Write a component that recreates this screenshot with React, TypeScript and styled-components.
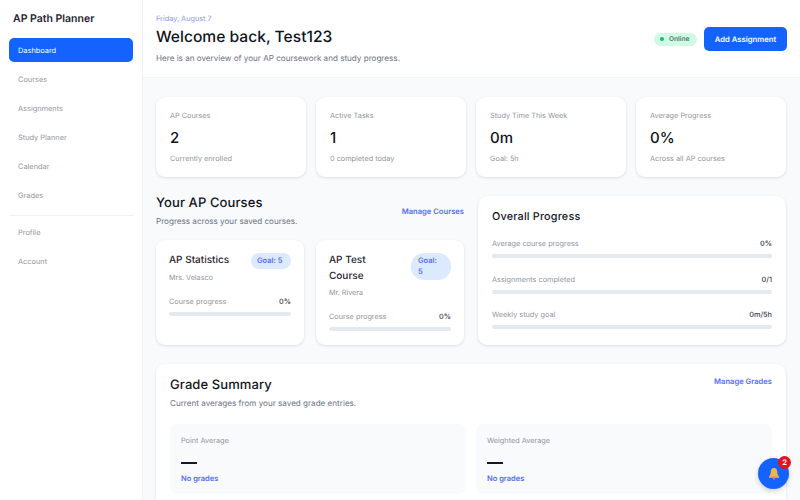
import * as React from 'react';
import styled, { createGlobalStyle } from 'styled-components';

const GlobalStyle = createGlobalStyle`
  html, body {
    margin: 0;
    height: 100%;
    overflow: hidden;
    background: #f8fafc;
    font-family: Inter, "Liberation Sans", sans-serif;
    color: #111827;
    text-rendering: geometricPrecision;
  }
  * { box-sizing: border-box; }
`;

const Shell = styled.div`
  display: flex;
  width: 800px;
  height: 500px;
  overflow: hidden;
`;

const Sidebar = styled.aside`
  flex: 0 0 143px;
  background: #fff;
  border-right: 1px solid #eef0f3;
  padding: 13px 9px;
`;

const Brand = styled.div`
  font-size: 10.5px;
  font-weight: 600;
  line-height: 12px;
  padding: 0 4px;
  margin-bottom: 13px;
  color: #1f2430;
`;

const NavItem = styled.div<{ $active?: boolean }>`
  height: 24px;
  display: flex;
  align-items: center;
  padding: 0 9px;
  margin-bottom: 5px;
  border-radius: 5px;
  font-size: 7.4px;
  background: ${p => (p.$active ? '#1463ff' : 'transparent')};
  color: ${p => (p.$active ? '#fff' : '#92969e')};
`;

const NavDivider = styled.div`
  height: 1px;
  background: #eef0f3;
  margin: 8px 0 4px;
`;

const Main = styled.main`
  flex: 1;
  min-width: 0;
`;

const Header = styled.header`
  height: 78px;
  background: #fff;
  border-bottom: 1px solid #f0f2f5;
  padding: 14px 13px 0 13px;
  display: flex;
  justify-content: space-between;
`;

const DateLine = styled.div`
  font-size: 7.3px;
  line-height: 9px;
  color: #8f95f5;
`;

const Welcome = styled.h1`
  margin: 4px 0 6px;
  font-size: 15.6px;
  line-height: 20px;
  font-weight: 500;
  color: #0f1320;
`;

const HeaderSub = styled.div`
  font-size: 8.1px;
  line-height: 11px;
  color: #6b7280;
`;

const HeaderActions = styled.div`
  display: flex;
  align-items: center;
  gap: 7px;
  height: 24px;
  margin-top: 13px;
`;

const OnlinePill = styled.div`
  height: 13px;
  width: 43px;
  padding: 0 6px;
  border-radius: 7px;
  background: #d1fae5;
  color: #4b7a6a;
  font-size: 6.6px;
  font-weight: 600;
  display: flex;
  align-items: center;
  gap: 5px;
`;

const OnlineDot = styled.span`
  flex: none;
  width: 4px;
  height: 4px;
  border-radius: 50%;
  background: #10b981;
`;

const AddButton = styled.div`
  height: 24px;
  width: 83px;
  border-radius: 5px;
  background: #1463ff;
  color: #fff;
  font-size: 7.7px;
  font-weight: 600;
  display: flex;
  align-items: center;
  justify-content: center;
`;

const Content = styled.div`
  padding: 19px 14px 0 13px;
`;

const StatsGrid = styled.div`
  display: grid;
  grid-template-columns: repeat(4, 150px);
  gap: 10px;
`;

const Card = styled.div`
  background: #fff;
  border-radius: 9px;
  box-shadow: 0 1px 3px rgba(17, 24, 39, 0.12);
`;

const StatCard = styled(Card)`
  height: 80px;
  padding: 14px 14px 0;
`;

const StatLabel = styled.div`
  font-size: 7.3px;
  line-height: 10px;
  color: #92969e;
`;

const StatValue = styled.div`
  font-size: 15px;
  line-height: 20px;
  margin: 7px 0 6px;
  font-weight: 500;
  color: #0f1320;
`;

const MiddleRow = styled.div`
  display: flex;
  gap: 14px;
  margin-top: 19px;
  height: 149px;
`;

const CoursesColumn = styled.section`
  width: 308px;
  display: flex;
  flex-direction: column;
`;

const SectionHead = styled.div`
  display: flex;
  justify-content: space-between;
  align-items: center;
  height: 44px;
  padding-bottom: 14px;
`;

const SectionTitle = styled.h2`
  margin: 0 0 5px;
  font-size: 13px;
  line-height: 16px;
  font-weight: 500;
  color: #12151f;
  letter-spacing: 0.1px;
`;

const SectionSub = styled.div`
  font-size: 8.1px;
  line-height: 11px;
  color: #6b7280;
`;

const LinkText = styled.div`
  font-size: 7.6px;
  font-weight: 600;
  color: #5570f0;
`;

const CourseGrid = styled.div`
  display: grid;
  grid-template-columns: 148px 148px;
  gap: 12px;
  height: 105px;
`;

const CourseCard = styled(Card)`
  padding: 13px 13px 0;
`;

const CourseTop = styled.div`
  display: flex;
  justify-content: space-between;
  align-items: flex-start;
  gap: 8px;
`;

const CourseName = styled.div`
  font-size: 10px;
  line-height: 15.5px;
  font-weight: 500;
  color: #1f2430;
`;

const GoalPill = styled.div<{ $wrapped?: boolean }>`
  flex: none;
  width: 40px;
  padding: ${p => (p.$wrapped ? '3px 12px 3px 7px' : '3px 6px')};
  border-radius: ${p => (p.$wrapped ? '13px' : '8px')};
  background: #dbeafe;
  color: #5a6ee8;
  font-size: 7.5px;
  line-height: ${p => (p.$wrapped ? '10.5px' : '10px')};
  font-weight: 600;
  white-space: ${p => (p.$wrapped ? 'normal' : 'nowrap')};
`;

const Teacher = styled.div`
  font-size: 7.2px;
  line-height: 10px;
  margin-top: 4px;
  color: #92969e;
`;

const ProgressBlock = styled.div<{ $top: number; $bottom?: number }>`
  margin-top: ${p => p.$top}px;
  margin-bottom: ${p => p.$bottom ?? 0}px;
`;

const ProgressLine = styled.div`
  display: flex;
  justify-content: space-between;
  align-items: center;
  font-size: 7.3px;
  line-height: 10px;
  color: #92969e;
`;

const ProgressValue = styled.span`
  color: #374151;
  font-weight: 500;
`;

const Track = styled.div`
  height: 4px;
  margin-top: 5px;
  border-radius: 2px;
  background: #e5e9f0;
`;

const OverallCard = styled(Card)`
  width: 308px;
  height: 149px;
  padding: 13px 14px 0;
`;

const OverallTitle = styled.h3`
  margin: 0 0 15px;
  font-size: 10.8px;
  line-height: 15px;
  font-weight: 500;
  color: #12151f;
  letter-spacing: 0.2px;
`;

const GradeCard = styled(Card)`
  margin-top: 19px;
  padding: 13px 14px 0;
  height: 150px;
`;

const GradeHead = styled.div`
  display: flex;
  justify-content: space-between;
  align-items: flex-start;
`;

const GradeGrid = styled.div`
  display: grid;
  grid-template-columns: 296px 296px;
  gap: 10px;
  margin-top: 15px;
`;

const GradePanel = styled.div`
  height: 70px;
  background: #f8fafc;
  border-radius: 7px;
  padding: 12px 11px 0;
`;

const GradeDash = styled.div`
  width: 16px;
  height: 2px;
  background: #111827;
  margin: 16px 0 10px;
`;

const GradeNote = styled.div`
  font-size: 7.5px;
  line-height: 10px;
  font-weight: 600;
  color: #5570f0;
`;

const Fab = styled.div`
  position: fixed;
  left: 758px;
  top: 458px;
  width: 31px;
  height: 31px;
  border-radius: 50%;
  background: #1463ff;
  box-shadow: 0 2px 5px rgba(17, 24, 39, 0.2);
  display: flex;
  align-items: center;
  justify-content: center;
`;

const FabBadge = styled.span`
  position: absolute;
  top: -2px;
  right: -2px;
  width: 13px;
  height: 13px;
  border-radius: 50%;
  background: #e5121f;
  color: #fff;
  font-size: 7.5px;
  font-weight: 700;
  display: flex;
  align-items: center;
  justify-content: center;
`;

const navTop = ['Courses', 'Assignments', 'Study Planner', 'Calendar', 'Grades'];
const stats = [
  { label: 'AP Courses', value: '2', note: 'Currently enrolled' },
  { label: 'Active Tasks', value: '1', note: '0 completed today' },
  { label: 'Study Time This Week', value: '0m', note: 'Goal: 5h' },
  { label: 'Average Progress', value: '0%', note: 'Across all AP courses' },
];
const overall = [
  { label: 'Average course progress', value: '0%' },
  { label: 'Assignments completed', value: '0/1' },
  { label: 'Weekly study goal', value: '0m/5h' },
];

function BellIcon() {
  return (
    <svg width="12" height="13" viewBox="0 0 12 13">
      <path d="M6 1c-2 0-3.200 1.500-3.200 3.600 0 2.400-.6 3.800-1.800 5v1h10v-1c-1.200-1.200-1.800-2.600-1.800-5C9.200 2.500 8 1 6 1z" fill="#f5b642" />
      <rect x="1" y="9.600" width="10" height="1.400" rx=".7" fill="#ee8a5a" />
      <circle cx="6" cy="11.600" r="1.100" fill="#e8734a" />
    </svg>
  );
}

export default function App() {
  return (
    <Shell>
      <GlobalStyle />
      <Sidebar>
        <Brand>AP Path Planner</Brand>
        <NavItem $active>Dashboard</NavItem>
        {navTop.map(n => <NavItem key={n}>{n}</NavItem>)}
        <NavDivider />
        <NavItem>Profile</NavItem>
        <NavItem>Account</NavItem>
      </Sidebar>
      <Main>
        <Header>
          <div>
            <DateLine>Friday, August 7</DateLine>
            <Welcome>Welcome back, Test123</Welcome>
            <HeaderSub>Here is an overview of your AP coursework and study progress.</HeaderSub>
          </div>
          <HeaderActions>
            <OnlinePill><OnlineDot />Online</OnlinePill>
            <AddButton>Add Assignment</AddButton>
          </HeaderActions>
        </Header>
        <Content>
          <StatsGrid>
            {stats.map(s => (
              <StatCard key={s.label}>
                <StatLabel>{s.label}</StatLabel>
                <StatValue>{s.value}</StatValue>
                <StatLabel>{s.note}</StatLabel>
              </StatCard>
            ))}
          </StatsGrid>
          <MiddleRow>
            <CoursesColumn>
              <SectionHead>
                <div>
                  <SectionTitle>Your AP Courses</SectionTitle>
                  <SectionSub>Progress across your saved courses.</SectionSub>
                </div>
                <LinkText>Manage Courses</LinkText>
              </SectionHead>
              <CourseGrid>
                <CourseCard>
                  <CourseTop>
                    <CourseName>AP Statistics</CourseName>
                    <GoalPill>Goal: 5</GoalPill>
                  </CourseTop>
                  <Teacher>Mrs. Velasco</Teacher>
                  <ProgressBlock $top={14}>
                    <ProgressLine>Course progress<ProgressValue>0%</ProgressValue></ProgressLine>
                    <Track />
                  </ProgressBlock>
                </CourseCard>
                <CourseCard>
                  <CourseTop>
                    <CourseName>AP Test<br />Course</CourseName>
                    <GoalPill $wrapped>Goal: 5</GoalPill>
                  </CourseTop>
                  <Teacher>Mr. Rivera</Teacher>
                  <ProgressBlock $top={14}>
                    <ProgressLine>Course progress<ProgressValue>0%</ProgressValue></ProgressLine>
                    <Track />
                  </ProgressBlock>
                </CourseCard>
              </CourseGrid>
            </CoursesColumn>
            <OverallCard>
              <OverallTitle>Overall Progress</OverallTitle>
              {overall.map(o => (
                <ProgressBlock key={o.label} $top={0} $bottom={16.5}>
                  <ProgressLine>{o.label}<ProgressValue>{o.value}</ProgressValue></ProgressLine>
                  <Track />
                </ProgressBlock>
              ))}
            </OverallCard>
          </MiddleRow>
          <GradeCard>
            <GradeHead>
              <div>
                <SectionTitle>Grade Summary</SectionTitle>
                <SectionSub>Current averages from your saved grade entries.</SectionSub>
              </div>
              <LinkText>Manage Grades</LinkText>
            </GradeHead>
            <GradeGrid>
              <GradePanel>
                <StatLabel>Point Average</StatLabel>
                <GradeDash />
                <GradeNote>No grades</GradeNote>
              </GradePanel>
              <GradePanel>
                <StatLabel>Weighted Average</StatLabel>
                <GradeDash />
                <GradeNote>No grades</GradeNote>
              </GradePanel>
            </GradeGrid>
          </GradeCard>
        </Content>
      </Main>
      <Fab>
        <BellIcon />
        <FabBadge>2</FabBadge>
      </Fab>
    </Shell>
  );
}
